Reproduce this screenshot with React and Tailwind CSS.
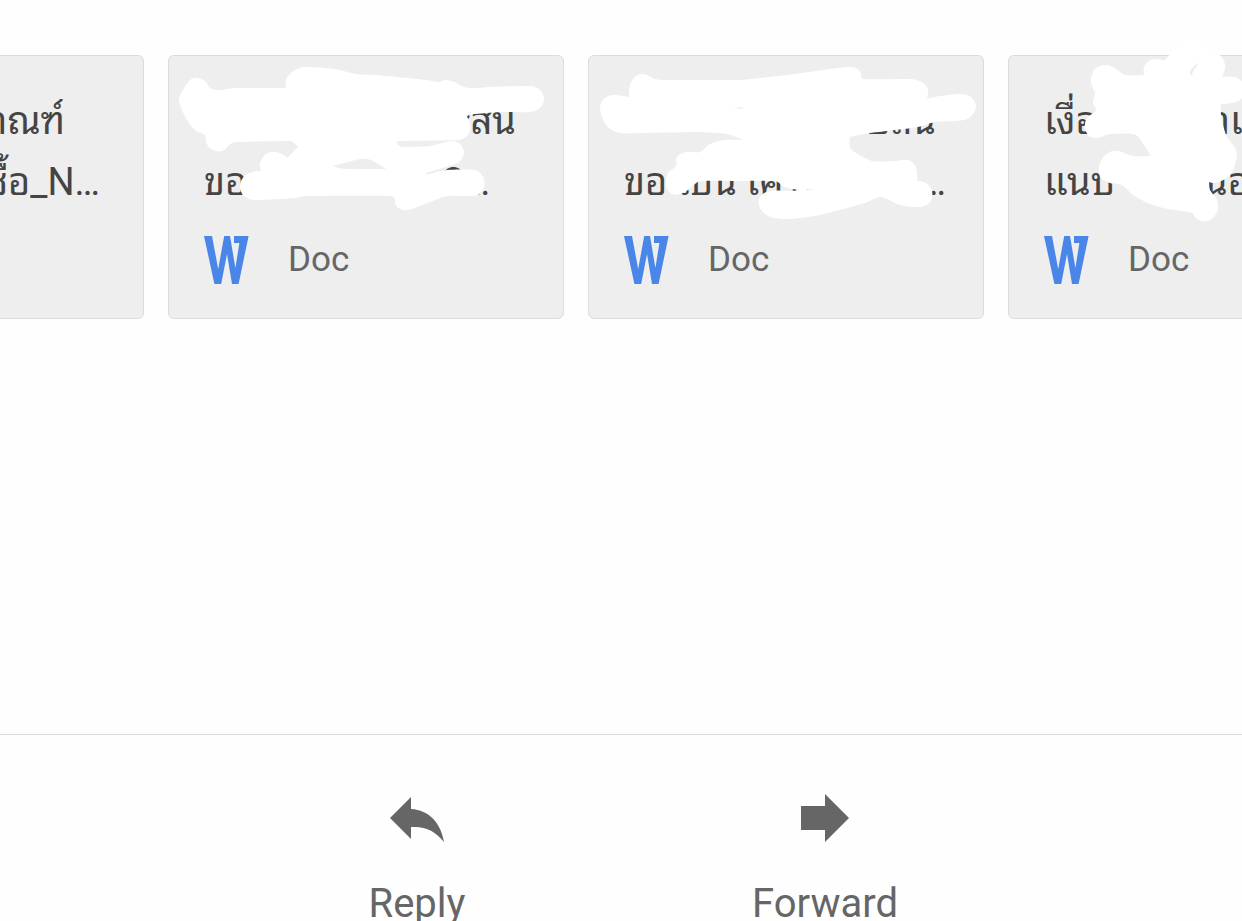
const smudges = {
  second: {
    viewBox: '168 55 396 264',
    outline: [
      [179, 101], [183, 90], [190, 80], [197, 78], [205, 81], [210, 88], [219, 90], [235, 88], [286, 88], [286, 80], [292, 72], [305, 67], [335, 69], [356, 74], [375, 75], [427, 80], [438, 82], [446, 80], [454, 82], [468, 88], [490, 87], [530, 86], [540, 90], [544, 99], [540, 108], [530, 112], [500, 112], [466, 115], [470, 124], [468, 135], [458, 140], [397, 141], [397, 144], [403, 147], [430, 146], [450, 141], [459, 143], [464, 152], [460, 161], [449, 166], [426, 173], [426, 175], [447, 170], [475, 170], [483, 177], [484, 187], [478, 195], [468, 196], [447, 196], [430, 202], [408, 210], [397, 207], [392, 196], [305, 196], [296, 198], [255, 200], [244, 196], [240, 185], [247, 174], [261, 171], [260, 163], [266, 154], [275, 152], [284, 155], [287, 158], [298, 147], [290, 141], [240, 142], [232, 143], [222, 151], [211, 149], [206, 142], [205, 135], [195, 130], [186, 118],
    ],
    gaps: [[[333, 166], [360, 159], [371, 160], [386, 169], [345, 169]]],
  },
  third: {
    viewBox: '588 55 396 264',
    outline: [
      [600, 110], [603, 100], [612, 95], [629, 97], [630, 85], [636, 76], [644, 74], [655, 79], [665, 80], [740, 80], [795, 74], [830, 69], [852, 67], [860, 71], [863, 79], [910, 79], [922, 82], [928, 90], [927, 99], [940, 96], [962, 94], [972, 98], [976, 107], [969, 118], [955, 121], [935, 122], [918, 127], [895, 130], [870, 133], [850, 137], [851, 149], [872, 161], [895, 161], [908, 160], [916, 167], [917, 181], [926, 183], [932, 191], [930, 202], [920, 207], [900, 205], [881, 197], [865, 203], [820, 215], [790, 219], [770, 217], [760, 208], [760, 197], [770, 191], [790, 191], [814, 189], [800, 190], [785, 187], [775, 181], [735, 181], [700, 181], [695, 184], [683, 193], [672, 194], [666, 185], [668, 173], [676, 166], [677, 157], [686, 152], [700, 152], [710, 144], [725, 140], [743, 140], [727, 134], [700, 132], [640, 133], [620, 133], [607, 126],
    ],
    gaps: [[[733, 108], [743, 107], [743, 109]]],
  },
  fourth: {
    viewBox: '1008 55 396 264',
    outline: [
      [1091, 78], [1096, 68], [1107, 65], [1116, 69], [1125, 75], [1144, 75], [1144, 67], [1149, 61], [1157, 59], [1165, 60], [1172, 51], [1185, 40], [1198, 37], [1205, 44], [1206, 54], [1216, 53], [1223, 59], [1225, 68], [1222, 77], [1235, 77], [1243, 84], [1242, 98], [1232, 103], [1221, 104], [1221, 115], [1223, 125], [1227, 137], [1236, 150], [1235, 165], [1228, 177], [1215, 183], [1209, 182], [1210, 190], [1217, 200], [1217, 212], [1208, 221], [1197, 219], [1192, 213], [1168, 209], [1150, 204], [1133, 195], [1122, 185], [1110, 183], [1100, 176], [1100, 163], [1108, 153], [1118, 151], [1133, 156], [1151, 156], [1136, 135], [1110, 134], [1097, 138], [1088, 135], [1085, 124], [1088, 117], [1096, 110], [1093, 103], [1095, 93], [1092, 86],
    ],
    gaps: [[[1190, 71], [1199, 62], [1191, 76]]],
  },
}

function unit(a, b) {
  const length = Math.hypot(b[0] - a[0], b[1] - a[1]) || 1
  return [(b[0] - a[0]) / length, (b[1] - a[1]) / length]
}

// Direction of the curve at a point; sharp corners have none and stay sharp.
function tangent(before, point, after) {
  const u = unit(before, point)
  const v = unit(point, after)
  return u[0] * v[0] + u[1] * v[1] < 0.3 ? [0, 0] : unit(before, after)
}

function smoothPath(points) {
  const n = points.length
  let d = `M${points[0][0]} ${points[0][1]}`
  for (let i = 0; i < n; i++) {
    const [a, b, c, e] = [points[(i - 1 + n) % n], points[i], points[(i + 1) % n], points[(i + 2) % n]]
    const reach = Math.min(Math.hypot(c[0] - b[0], c[1] - b[1]) / 3, 5)
    const s = tangent(a, b, c)
    const t = tangent(b, c, e)
    d += `C${b[0] + s[0] * reach} ${b[1] + s[1] * reach} ${c[0] - t[0] * reach} ${c[1] - t[1] * reach} ${c[0]} ${c[1]}`
  }
  return d + 'Z'
}

function Smudge({ shape }) {
  const d = [smoothPath(shape.outline), ...shape.gaps.map(smoothPath)].join(' ')
  return (
    <svg
      aria-hidden="true"
      viewBox={shape.viewBox}
      className="pointer-events-none absolute -top-px -left-px h-[264px] w-[396px] overflow-visible"
    >
      <path d={d} fill="#ffffff" fillRule="evenodd" />
    </svg>
  )
}

function DocIcon() {
  return (
    <svg aria-hidden="true" viewBox="0 0 45 48" className="h-12 w-[45px]">
      <path
        fill="#4a86e8"
        d="M0 0H8L14.2 33L20.2 0H26L31.4 32L35.4 7H30V0H44.6L34.6 48H28L23 18L17.2 48H10.4Z"
      />
    </svg>
  )
}

function Card({ lines, smudge }) {
  return (
    <article className="relative h-[264px] w-[396px] shrink-0 rounded-md border border-[#dcdcdc] bg-[#eeeeee] px-[35px] pt-[35px]">
      <h2 className="text-[38px] leading-[61px] text-[#444444]">
        {lines}
      </h2>
      <div className="mt-[23px] flex items-center gap-[39px]">
        <DocIcon />
        <span className="text-[35px] leading-[46px] text-[#666666]">Doc</span>
      </div>
      {smudge && <Smudge shape={smudge} />}
    </article>
  )
}

function Line({ className = '', children }) {
  return <span className={`flex whitespace-nowrap ${className}`}>{children}</span>
}

function Action({ label, children }) {
  return (
    <button type="button" className="flex w-[408px] flex-col items-center gap-8 text-[#666666]">
      <svg aria-hidden="true" viewBox="0 0 60 60" className="size-[60px] shrink-0">
        {children}
      </svg>
      <span className="text-[40px] leading-[48px]">{label}</span>
    </button>
  )
}

export default function App() {
  return (
    <div className="flex h-screen flex-col overflow-hidden bg-[#fefefe] font-['Roboto','Noto_Sans_Thai_Looped','Loma','Garuda','Waree','Liberation_Sans',sans-serif]">
      <main className="flex-1 pt-[55px]">
        <section aria-label="Attachments" className="-ml-[252px] flex gap-6">
          <Card
            lines={
              <>
                <Line className="justify-end pr-[43px]">าณฑ์</Line>
                <Line className="justify-end pr-2">ซื้อ_N…</Line>
              </>
            }
          />
          <Card
            smudge={smudges.second}
            lines={
              <>
                <Line className="justify-end pr-3">ะสน</Line>
                <Line className="justify-between pr-[38px]">
                  <span>ขอ</span>
                  <span>O…</span>
                </Line>
              </>
            }
          />
          <Card
            smudge={smudges.third}
            lines={
              <>
                <Line className="justify-end pr-3">บสน</Line>
                <Line className="justify-between pr-0.5">
                  <span>ขอ เบน เศาร</span>
                  <span>…</span>
                </Line>
              </>
            }
          />
          <Card
            smudge={smudges.fourth}
            lines={
              <>
                <Line>
                  <span className="w-[170px]">เงื่อ</span>
                  <span>าเ</span>
                </Line>
                <Line>
                  <span className="w-[160px]">แนบ</span>
                  <span>นอ</span>
                </Line>
              </>
            }
          />
        </section>
      </main>
      <footer className="flex h-[187px] shrink-0 items-start justify-center border-t border-[#dcdcdc] pt-[53px]">
        <Action label="Reply">
          <path fill="currentColor" d="M3 30L24 9V21C42 22 54 35 57 54C48 43 39 38 24 39V51Z" />
        </Action>
        <Action label="Forward">
          <path fill="currentColor" d="M6 18H30V6L54 30L30 54V42H6Z" />
        </Action>
      </footer>
    </div>
  )
}
